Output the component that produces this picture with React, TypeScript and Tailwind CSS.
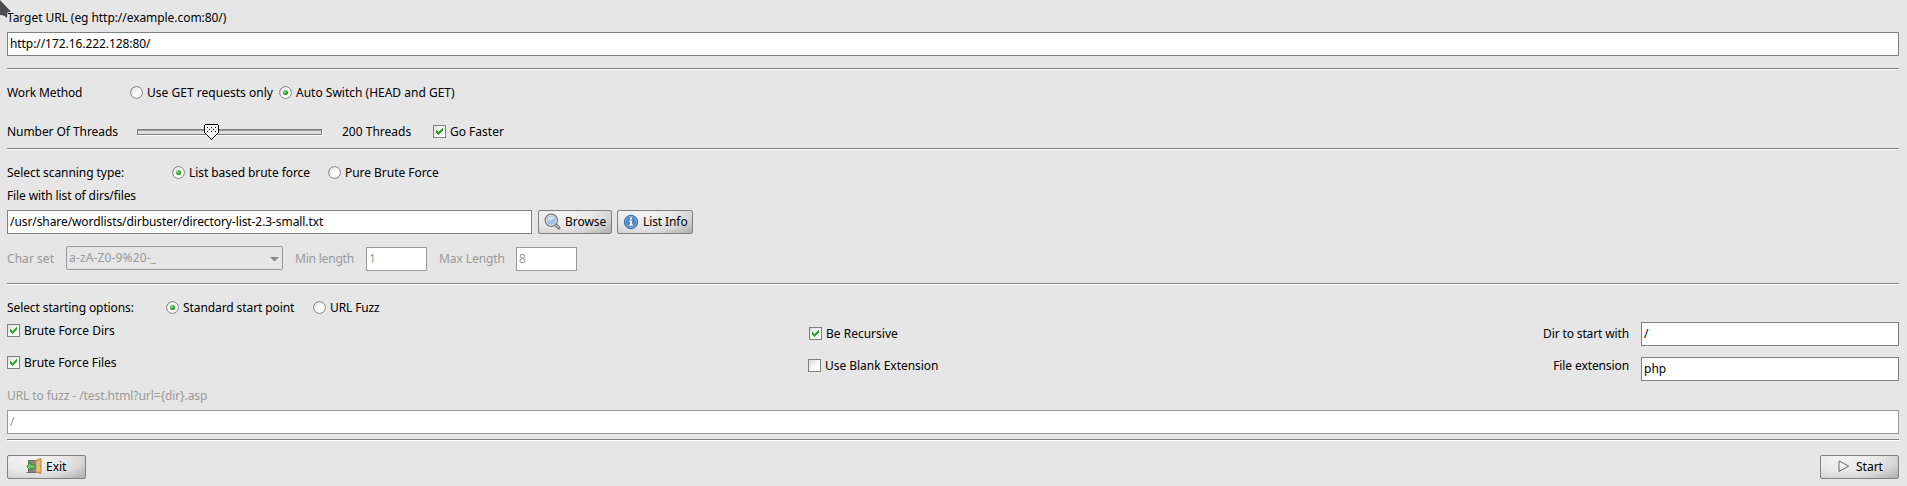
import type { ReactNode } from "react";

function Label({ children, className = "" }: { children: ReactNode; className?: string }) {
  return <span className={`block h-4 shrink-0 whitespace-pre pt-px text-[12px] leading-4 ${className}`}>{children}</span>;
}

function Separator({ className = "" }: { className?: string }) {
  return <div className={`h-[2px] shrink-0 border-t border-b border-t-[#808080] border-b-white ${className}`} />;
}

function Radio({ checked = false, label, className = "", text = "" }: { checked?: boolean; label: string; className?: string; text?: string }) {
  return (
    <label className={`flex shrink-0 items-start gap-[4px] ${className}`}>
      <svg width="13" height="13" viewBox="0 0 13 13" className="mt-[2px] shrink-0">
        <defs>
          <linearGradient id="radioFill" x1="0" y1="0" x2="1" y2="1">
            <stop offset="0" stopColor="#dedede" />
            <stop offset="0.6" stopColor="#ffffff" />
          </linearGradient>
          <radialGradient id="radioDot" cx="0.35" cy="0.35" r="0.7">
            <stop offset="0" stopColor="#a5dba5" />
            <stop offset="0.6" stopColor="#35a535" />
            <stop offset="1" stopColor="#21a121" />
          </radialGradient>
        </defs>
        <circle cx="6.5" cy="6.5" r="5.9" fill="url(#radioFill)" stroke="#808080" />
        {checked && <circle cx="6.5" cy="6.5" r="2.6" fill="url(#radioDot)" />}
      </svg>
      <Label className={text}>{label}</Label>
    </label>
  );
}

function Check({ checked = false, label, className = "", text = "" }: { checked?: boolean; label: string; className?: string; text?: string }) {
  return (
    <label className={`flex shrink-0 items-start gap-[4px] ${className}`}>
      <span className="mt-[2px] flex size-[13px] shrink-0 items-center justify-center border border-[#808080] bg-linear-to-br from-[#dedede] to-white to-70%">
        {checked && (
          <svg width="11" height="11" viewBox="0 0 11 11" shapeRendering="crispEdges">
            <path d="M2 4h1v1h1v1h1v-1h1v-1h1v-1h1v-1h1v3h-1v1h-1v1h-1v1h-1v1h-1v-1h-1v-1h-1z" fill="#28ab28" />
          </svg>
        )}
      </span>
      <Label className={text}>{label}</Label>
    </label>
  );
}

function Field({ value, disabled = false, className = "", text = "" }: { value: string; disabled?: boolean; className?: string; text?: string }) {
  return (
    <div className={`h-6 shrink-0 border bg-white pl-[2px] pt-[2px] ${disabled ? "border-[#999999] text-[#999999]" : "border-[#808080]"} ${className}`}>
      <Label className={text}>{value}</Label>
    </div>
  );
}

function Button({ children, className = "" }: { children: ReactNode; className?: string }) {
  return (
    <button className={`flex h-6 shrink-0 items-start rounded-[2px] border border-[#808080] bg-[radial-gradient(ellipse_85%_115%_at_30%_10%,#f4f4f4_0%,#e9e9e9_50%,#d8d8d8_78%,#b4b4b4_105%)] pt-[2px] ${className}`}>
      {children}
    </button>
  );
}

function SliderBar() {
  return (
    <svg width="187" height="16" viewBox="0 0 187 16" className="shrink-0" shapeRendering="crispEdges">
      <rect x="1" y="6" width="185" height="6" fill="#ffffff" />
      <rect x="0.5" y="5.5" width="184" height="5" fill="#dedede" stroke="#808080" />
      <rect x="1" y="6" width="183" height="1" fill="#999999" />
      <g transform="translate(67 0)">
        <rect x="1" y="1" width="13" height="8" fill="#f4f4f4" />
        <rect x="1" y="0" width="13" height="1" />
        <rect x="0" y="1" width="1" height="8" />
        <rect x="14" y="1" width="1" height="8" />
        {[0, 1, 2, 3, 4, 5].map((i) => (
          <g key={i}>
            <rect x={i + 2} y={i + 9} width={11 - 2 * i} height="1" fill="#f4f4f4" />
            <rect x={i + 1} y={i + 9} width="1" height="1" />
            <rect x={13 - i} y={i + 9} width="1" height="1" />
          </g>
        ))}
        <rect x="7" y="15" width="1" height="1" />
        {[3, 7, 11].map((x) => (
          <g key={x}>
            <rect x={x} y="3" width="1" height="1" />
            <rect x={x} y="7" width="1" height="1" />
          </g>
        ))}
        {[5, 9].map((x) => (
          <rect key={x} x={x} y="5" width="1" height="1" />
        ))}
      </g>
    </svg>
  );
}

function MagnifierIcon() {
  return (
    <svg width="17" height="17" viewBox="0 0 17 17">
      <path d="M11.500 11.500l3.300 3.300" stroke="#777773" strokeWidth="3.200" strokeLinecap="round" />
      <path d="M11.500 11.500l3.300 3.300" stroke="#c9c9c5" strokeWidth="1.200" />
      <circle cx="7.300" cy="7.300" r="6.100" fill="#8fb4e2" stroke="#777773" strokeWidth="1.300" />
      <circle cx="7.300" cy="7.300" r="5" fill="#9fc1ea" stroke="#e4e4e2" />
      <path d="M3.500 7.500a4 4 0 0 1 7-2.700c-1.500 2-4 2.900-7 2.700z" fill="#cfe1f6" />
    </svg>
  );
}

function InfoIcon() {
  return (
    <svg width="16" height="16" viewBox="0 0 16 16" className="mt-px">
      <circle cx="8" cy="8" r="6.700" fill="#4a80c0" stroke="#3467a6" />
      <circle cx="8" cy="8" r="5.600" fill="#5087c6" stroke="#8db3e0" strokeWidth="0.900" />
      <path d="M7 3.500h2v2H7zM6 6.500h3v4h1v1.200H6v-1.200h1v-3H6z" fill="#ffffff" />
    </svg>
  );
}

function ExitIcon() {
  return (
    <svg width="16" height="16" viewBox="0 0 16 16">
      <path d="M0.500 14.500h11" stroke="#6a6c69" />
      <rect x="2.500" y="2.500" width="8" height="12" fill="#858783" stroke="#6a6c68" />
      <path d="M9.500 2.500l5.500-2v15l-5.500-1.500z" fill="#e0aa68" stroke="#c98a3c" />
      <path d="M11 4l3-1v10.500l-3-0.500z" fill="#e9bb80" />
      <rect x="13" y="8" width="1" height="1.500" fill="#f3c422" />
      <path d="M0.700 8.500l4-4v2.300h4.500v3.600h-4.500v2.300z" fill="#73c470" stroke="#2d8a32" strokeWidth="0.900" />
    </svg>
  );
}

function PlayIcon() {
  return (
    <svg width="12" height="13" viewBox="0 0 12 13" className="mt-[2px]">
      <path d="M1 0.900l9.700 5.200l-9.700 5.400z" fill="#f1f1f1" stroke="#666864" />
    </svg>
  );
}

export default function App() {
  return (
    <main className="relative flex h-[486px] w-[1907px] flex-col overflow-hidden bg-[#e6e6e6] px-[7px] pr-[8px] font-['Noto_Sans',sans-serif] text-black">
      <Label className="mt-[9px] tracking-[-0.06px]">Target URL (eg http://example.com:80/)</Label>
      <Field value="http://172.16.222.128:80/" className="mt-[7px]" text="tracking-[-0.07px]" />
      <Separator className="mt-[12px]" />

      <div className="mt-[14px] flex h-4 shrink-0">
        <Label className="w-[123px] tracking-[-0.12px]">Work Method</Label>
        <Radio label="Use GET requests only" className="w-[149px]" text="tracking-[0.02px]" />
        <Radio checked label="Auto Switch (HEAD and GET)" />
      </div>
      <div className="mt-[23px] flex h-4 shrink-0">
        <Label className="w-[130px] tracking-[-0.06px]">Number Of Threads</Label>
        <div className="mt-px w-[205px] shrink-0">
          <SliderBar />
        </div>
        <Label className="w-[91px]">200 Threads</Label>
        <Check checked label="Go Faster" />
      </div>
      <Separator className="mt-[9px]" />

      <div className="mt-[14px] flex h-4 shrink-0">
        <Label className="w-[165px] tracking-[-0.06px]">Select scanning type:</Label>
        <Radio checked label="List based brute force" className="w-[156px]" text="tracking-[-0.06px]" />
        <Radio label="Pure Brute Force" text="tracking-[-0.04px]" />
      </div>
      <Label className="mt-[7px] tracking-[-0.11px]">File with list of dirs/files</Label>
      <div className="mt-[7px] flex h-6 shrink-0">
        <Field value="/usr/share/wordlists/dirbuster/directory-list-2.3-small.txt" className="w-[525px]" text="tracking-[-0.08px]" />
        <Button className="ml-[6px] w-[74px] pl-[5px]">
          <MagnifierIcon />
          <Label className="ml-[4px] tracking-[-0.05px]">Browse</Label>
        </Button>
        <Button className="ml-[5px] w-[76px] pl-[5px]">
          <InfoIcon />
          <Label className="ml-[4px] tracking-[-0.1px]">List Info</Label>
        </Button>
      </div>
      <div className="mt-[12px] flex h-[25px] shrink-0 text-[#999999]">
        <Label className="mt-[4px] w-[59px] tracking-[0.05px]">Char set</Label>
        <div className="flex h-6 w-[217px] shrink-0 rounded-[2px] border border-[#999999] pl-[2px] pt-[2px]">
          <Label className="flex-1 tracking-[0.15px]">a-zA-Z0-9%20-_</Label>
          <svg width="9" height="5" viewBox="0 0 9 5" className="mr-[3px] mt-[8px]">
            <path d="M0 0h9l-4.500 4.500z" fill="#858585" />
          </svg>
        </div>
        <Label className="ml-[12px] mt-[4px] w-[71px] tracking-[-0.2px]">Min length</Label>
        <Field disabled value="1" className="mt-px w-[61px]" />
        <Label className="ml-[12px] mt-[4px] w-[77px] tracking-[-0.08px]">Max Length</Label>
        <Field disabled value="8" className="mt-px w-[61px]" />
      </div>
      <Separator className="mt-[12px]" />

      <div className="mt-[14px] flex h-4 shrink-0">
        <Label className="w-[159px] tracking-[-0.1px]">Select starting options:</Label>
        <Radio checked label="Standard start point" className="w-[147px]" text="tracking-[-0.09px]" />
        <Radio label="URL Fuzz" text="tracking-[-0.12px]" />
      </div>
      <div className="mt-[7px] flex h-[59px] shrink-0">
        <div className="flex w-[801px] flex-col gap-4">
          <Check checked label="Brute Force Dirs" />
          <Check checked label="Brute Force Files" text="tracking-[-0.04px]" />
        </div>
        <div className="flex flex-1 flex-col gap-4 pt-[3px]">
          <Check checked label="Be Recursive" className="ml-px" />
          <Check label="Use Blank Extension" text="tracking-[-0.03px]" />
        </div>
        <div className="flex flex-col items-end gap-4 pr-[12px] pt-[3px]">
          <Label className="tracking-[-0.13px]">Dir to start with</Label>
          <Label className="tracking-[-0.1px]">File extension</Label>
        </div>
        <div className="flex w-[258px] flex-col gap-[11px]">
          <Field value="/" />
          <Field value="php" />
        </div>
      </div>
      <Label className="mt-[6px] tracking-[-0.08px] text-[#999999]">{"URL to fuzz - /test.html?url={dir}.asp"}</Label>
      <Field disabled value="/" className="mt-[7px]" />
      <Separator className="mt-[5px]" />

      <div className="mt-[14px] flex shrink-0 justify-between">
        <Button className="w-[79px] pl-[18px]">
          <ExitIcon />
          <Label className="ml-[4px]">Exit</Label>
        </Button>
        <Button className="w-[79px] pl-[17px]">
          <PlayIcon />
          <Label className="ml-[6px]">Start</Label>
        </Button>
      </div>

      <svg width="14" height="22" viewBox="0 0 14 22" className="absolute left-0 top-0">
        <path d="M0 0l11 11.500l-3.500 1l-0.500 5.500l-3.500-2.500l-3.500-0.500z" fill="#4b4b4b" stroke="#f4f4f4" strokeWidth="1.200" paintOrder="stroke" />
      </svg>
    </main>
  );
}
